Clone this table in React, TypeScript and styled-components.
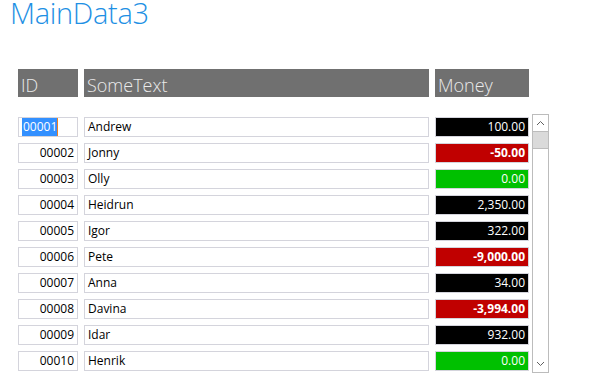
import styled, { createGlobalStyle } from "styled-components";

//styles
const GlobalStyle = createGlobalStyle`
  html, body {
    margin: 0;
    padding: 0;
    background: #ffffff;
    font-family: "Open Sans", "Noto Sans", sans-serif;
  }
`;
const Page = styled.div`
  width: 599px;
  height: 381px;
  overflow: hidden;
  display: flex;
  flex-direction: column;
`;
const Title = styled.h1`
  margin: -3px 0 0 0;
  padding: 0 0 0 10px;
  height: 40px;
  font-size: 29px;
  line-height: 32px;
  font-weight: 300;
  color: #1e90e4;
  letter-spacing: -0.3px;
`;
const Grid = styled.div`
  display: grid;
  grid-template-columns: 60px 345px 94px;
  column-gap: 6px;
  margin-left: 18px;
`;
const Header = styled(Grid)`
  margin-top: 32px;
  height: 28px;
`;
const HeadCell = styled.div`
  background: #707070;
  color: #eaeaea;
  font-size: 18px;
  font-weight: 300;
  line-height: 32px;
  padding-left: 3px;
  overflow: hidden;
  white-space: nowrap;
`;
const Body = styled.div`
  display: flex;
  margin-top: 17px;
`;
const List = styled.div`
  height: 259px;
  overflow: hidden;
  display: flex;
  flex-direction: column;
  gap: 6px;
  padding-top: 3px;
  box-sizing: border-box;
`;
const Row = styled(Grid)`
  height: 20px;
  flex: none;
`;
const Cell = styled.div<{ $align?: string }>`
  box-sizing: border-box;
  border: 1px solid #d4d4dc;
  font-size: 12px;
  line-height: 18px;
  padding: 0 3px;
  text-align: ${(p) => p.$align || "left"};
  color: #000;
  white-space: nowrap;
  overflow: hidden;
`;
const Selected = styled.span`
  background: #3390ff;
  color: #fff;
  padding: 1px 0 1px 1px;
  border-right: 1px solid #f08020;
`;
const MoneyCell = styled.div<{ $bg: string; $bold: boolean }>`
  box-sizing: border-box;
  border: 1px solid #d4d4dc;
  background: ${(p) => p.$bg};
  color: #ffffff;
  font-size: 12px;
  font-weight: ${(p) => (p.$bold ? 700 : 400)};
  line-height: 18px;
  text-align: right;
  padding: 0 3px;
  white-space: nowrap;
`;
const ScrollBar = styled.div`
  margin-left: 3px;
  width: 17px;
  height: 259px;
  box-sizing: border-box;
  border: 1px solid #bcbcbc;
  display: flex;
  flex-direction: column;
`;
const Arrow = styled.div`
  height: 16px;
  display: flex;
  align-items: center;
  justify-content: center;
  flex: none;
`;
const Thumb = styled.div`
  height: 18px;
  background: #dadada;
  border-top: 1px solid #bcbcbc;
  border-bottom: 1px solid #bcbcbc;
  box-sizing: border-box;
  flex: none;
`;
const Track = styled.div`
  flex: 1;
`;

type Item = { id: string; name: string; money: number };

const data: Item[] = [
  { id: "00001", name: "Andrew", money: 100 },
  { id: "00002", name: "Jonny", money: -50 },
  { id: "00003", name: "Olly", money: 0 },
  { id: "00004", name: "Heidrun", money: 2350 },
  { id: "00005", name: "Igor", money: 322 },
  { id: "00006", name: "Pete", money: -9000 },
  { id: "00007", name: "Anna", money: 34 },
  { id: "00008", name: "Davina", money: -3994 },
  { id: "00009", name: "Idar", money: 932 },
  { id: "00010", name: "Henrik", money: 0 },
];

//util
const fmt = (n: number) =>
  n.toLocaleString("en-US", { minimumFractionDigits: 2, maximumFractionDigits: 2 });
const colorOf = (n: number) => (n < 0 ? "#c00000" : n === 0 ? "#00c000" : "#000000");

const Chevron = ({ up }: { up?: boolean }) => (
  <svg width="9" height="6" viewBox="0 0 9 6">
    <path
      d={up ? "M1 5 L4.5 1.5 L8 5" : "M1 1 L4.5 4.5 L8 1"}
      fill="none"
      stroke="#606060"
      strokeWidth="1"
    />
  </svg>
);

const App = () => {
  return (
    <Page>
      <GlobalStyle />
      <Title>MainData3</Title>
      <Header>
        <HeadCell>ID</HeadCell>
        <HeadCell>SomeText</HeadCell>
        <HeadCell>Money</HeadCell>
      </Header>
      <Body>
        <List>
          {data.map((d, i) => (
            <Row key={d.id}>
              {i === 0 ? (
                <Cell>
                  <Selected>{d.id}</Selected>
                </Cell>
              ) : (
                <Cell $align="right">{d.id}</Cell>
              )}
              <Cell>{d.name}</Cell>
              <MoneyCell $bg={colorOf(d.money)} $bold={d.money < 0}>
                {fmt(d.money)}
              </MoneyCell>
            </Row>
          ))}
        </List>
        <ScrollBar>
          <Arrow>
            <Chevron up />
          </Arrow>
          <Thumb />
          <Track />
          <Arrow>
            <Chevron />
          </Arrow>
        </ScrollBar>
      </Body>
    </Page>
  );
};

export default App;
